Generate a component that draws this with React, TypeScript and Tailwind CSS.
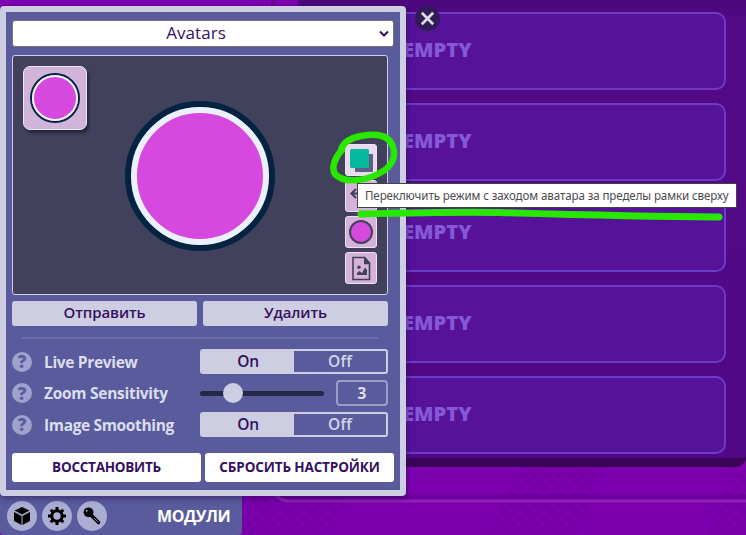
import React from 'react';

const sans = "font-['Open_Sans','Noto_Sans',sans-serif]";

function EmptySlot() {
  return (
    <div className="flex h-[78px] w-[428px] shrink-0 items-center rounded-[10px] border-2 border-[#6b3cc5] bg-[#56139a] pb-[2px] pl-[103px] text-[19px] font-extrabold text-[#8558d7]">
      <span className="inline-block origin-left scale-x-[1.06] leading-none">EMPTY</span>
    </div>
  );
}

function Backdrop() {
  return (
    <div className="h-[535px] w-[746px] bg-[#7d00ae]">
      <div className="flex h-[467px]">
        <div className="h-full w-[275px] border-r-4 border-[#6a0095] bg-[#7d00b4]" />
        <div className="w-[23px] bg-[#7d00b4]" />
        <div className="flex h-full w-[448px] flex-col gap-[13px] rounded-br-[10px] border-b-[9px] border-[#3a0558] bg-gradient-to-b from-[#4b077b] via-[#540986] via-5% to-[#520886] pt-3">
          <EmptySlot />
          <EmptySlot />
          <EmptySlot />
          <EmptySlot />
          <EmptySlot />
        </div>
      </div>
      <svg className="block" width="746" height="68" viewBox="0 0 746 68">
        <defs>
          <pattern id="dots" width="12" height="12" patternUnits="userSpaceOnUse" patternTransform="skewX(-12)">
            <circle cx="3" cy="3" r="3.4" fill="#7500a3" />
            <circle cx="9" cy="9" r="3.4" fill="#7500a3" />
          </pattern>
        </defs>
        <path d="M225 27H348L327 68H225ZM521 2H602L580 68H484ZM731 2H746V68H708Z" fill="url(#dots)" />
        <path d="M274 0V15Q274 30 290 30H746" fill="none" stroke="#69009a" strokeWidth="5" opacity=".75" />
        <path d="M274 0V18Q274 34 290 34H746" fill="none" stroke="#8d20b7" strokeWidth="3" />
      </svg>
    </div>
  );
}

function Toggle() {
  return (
    <div className="flex h-[25px] w-[188px] overflow-hidden rounded-[3px] border-2 border-[#cdcee2] text-[15.5px] font-semibold leading-[21px]">
      <div className="w-[92px] bg-[#cdcee2] text-center tracking-[-0.2px] text-[#34105f]">On</div>
      <div className="w-[92px] text-center tracking-[0.2px] text-[#d4d5e6]">Off</div>
    </div>
  );
}

function Row({ label, tracking, children }: { label: string; tracking: string; children: React.ReactNode }) {
  return (
    <div className="flex items-center">
      <div className="flex h-5 w-5 items-center justify-center rounded-full bg-[#a0a2cb] text-[17px] font-extrabold leading-none text-[#5b5ca1]">?</div>
      <div className={'w-[168px] whitespace-nowrap pl-3 text-[15.5px] font-bold leading-5 text-[#dcddec] ' + tracking}>{label}</div>
      {children}
    </div>
  );
}

function ToolButton({ children, active = false }: { children?: React.ReactNode; active?: boolean }) {
  return (
    <div className={'flex h-8 w-8 items-center justify-center rounded-[3px] border border-[#efe1f3] ' + (active ? 'bg-[#e9daee]' : 'bg-[#d5b2da]')}>
      {children}
    </div>
  );
}

function Preview() {
  return (
    <div className="relative mt-2 flex h-[240px] w-[376px] items-center justify-center rounded-[3px] border border-[#cdcee2] bg-[#41415e] pt-[2px]">
      <div className="h-[150px] w-[150px] rounded-full border-[6px] border-[#032340]">
        <div className="h-full w-full rounded-full border-[6px] border-[#eaf0fc] bg-[#d748df]" />
      </div>
      <div className="absolute left-[10px] top-[10px] flex h-16 w-16 items-center justify-center rounded-[7px] border border-[#eee6f7] bg-[#d0b4da] shadow-[2px_3px_3px_#242438]">
        <div className="h-[50px] w-[50px] rounded-full border-2 border-[#032340]">
          <div className="h-full w-full rounded-full border-2 border-[#eaf0fc] bg-[#d748df]" />
        </div>
      </div>
      <div className="absolute right-[10px] top-[88px] flex flex-col gap-1">
        <ToolButton active>
          <svg width="30" height="30" viewBox="0 0 30 30">
            <rect x="9" y="9" width="18" height="18" rx="1" fill="#5f5f83" />
            <rect x="4" y="4" width="19" height="19" rx="1.5" fill="#05b99d" />
          </svg>
        </ToolButton>
        <ToolButton>
          <svg width="30" height="30" viewBox="0 0 30 30" fill="none" stroke="#414461" strokeWidth="2.2">
            <path d="M5.500 12.500H25M10 8L5.500 12.500L10 17" />
          </svg>
        </ToolButton>
        <ToolButton>
          <div className="h-6 w-6 rounded-full border-2 border-[#41415e] bg-[#d748df]" />
        </ToolButton>
        <ToolButton>
          <svg width="30" height="30" viewBox="0 0 30 30">
            <path d="M7 4.500H18.500L23.500 10V26.500H7Z" fill="none" stroke="#41415e" strokeWidth="1.600" />
            <path d="M18 4H19L24.300 10V11.300H18ZM11 22V20L13.300 18L16 20L19 14.500L21 17V22Z" fill="#41415e" />
            <circle cx="13" cy="14.300" r="1.700" fill="#41415e" />
          </svg>
        </ToolButton>
      </div>
    </div>
  );
}

function SettingsPanel() {
  return (
    <div className="absolute left-0 top-[6px] flex h-[490px] w-[406px] flex-col rounded-[4px] border-[6px] border-[#cdcee2] bg-[#595b9d] px-[6px] pt-2 shadow-[1px_2px_6px_#200b4888]">
      <div className="relative flex h-[27px] w-[382px] shrink-0 items-center justify-center rounded-[3px] border border-[#77756d] bg-white pb-[2px] pr-4 text-[17px] font-medium leading-none tracking-[0.05px] text-[#34105f]">
        <span className="pl-[2px]">Avatars</span>
        <svg className="absolute right-[4px] top-[8px]" width="10" height="10" viewBox="0 0 10 10" fill="none" stroke="#34105f" strokeWidth="2">
          <path d="M1 2.500L5 6.500L9 2.500" />
        </svg>
      </div>
      <Preview />
      <div className="mt-[6px] flex gap-[6px] text-[15px] font-semibold leading-[23px] text-[#34105f]">
        <div className="h-[25px] w-[185px] rounded-[3px] bg-[#cdcee2] text-center tracking-[-0.1px]">Отправить</div>
        <div className="h-[25px] w-[185px] rounded-[3px] bg-[#cdcee2] text-center tracking-[-0.1px]">Удалить</div>
      </div>
      <div className="ml-[10px] mt-[11px] h-[2px] w-[356px] shrink-0 bg-[#6a6cab]" />
      <div className="mt-[10px] flex flex-col gap-[6px]">
        <Row label="Live Preview" tracking="tracking-[-0.33px]">
          <Toggle />
        </Row>
        <Row label="Zoom Sensitivity" tracking="tracking-[-0.28px]">
          <div className="flex w-[136px] items-center">
            <div className="flex h-[5px] w-[124px] items-center rounded-full bg-[#252746] pl-[23px]">
              <div className="h-5 w-5 shrink-0 rounded-full bg-[#cdcee2]" />
            </div>
          </div>
          <div className="h-[26px] w-[52px] rounded-[4px] border-2 border-[#9b9dc8] text-center text-[15.5px] font-bold leading-[22px] text-[#dcddec]">3</div>
        </Row>
        <Row label="Image Smoothing" tracking="tracking-[-0.35px]">
          <Toggle />
        </Row>
      </div>
      <div className="mt-4 flex gap-1 whitespace-nowrap text-[13.5px] font-bold leading-[29px] text-[#34105f]">
        <div className="h-[29px] w-[189px] rounded-[3px] bg-white text-center tracking-[-0.25px]">ВОССТАНОВИТЬ</div>
        <div className="h-[29px] w-[189px] rounded-[3px] bg-white text-center tracking-[-0.13px]">СБРОСИТЬ НАСТРОЙКИ</div>
      </div>
    </div>
  );
}

function ModuleBar() {
  return (
    <div className="absolute bottom-0 left-0 flex h-[45px] w-[242px] items-center gap-[5px] rounded-b-[4px] bg-[#595b9d] pl-[7px] pt-[7px]">
      <svg width="30" height="30" viewBox="0 0 30 30">
        <circle cx="15" cy="15" r="15" fill="#abadd2" />
        <path d="M15 6L22.500 9.500L15 13.500L7.500 9.500ZM7 11L14.500 15V24L7 20ZM23 11L15.500 15V24L23 20Z" />
      </svg>
      <svg width="30" height="30" viewBox="0 0 30 30">
        <circle cx="15" cy="15" r="15" fill="#abadd2" />
        <g stroke="#000" strokeWidth="3">
          <path d="M15 6V10M15 20V24M6 15H10M20 15H24M8.700 8.700L11.500 11.500M18.500 18.500L21.300 21.300M21.300 8.700L18.500 11.500M11.500 18.500L8.700 21.300" />
          <circle cx="15" cy="15" r="5.2" fill="none" strokeWidth="3" />
        </g>
      </svg>
      <svg width="30" height="30" viewBox="0 0 30 30">
        <circle cx="15" cy="15" r="15" fill="#abadd2" />
        <circle cx="11.5" cy="11.3" r="4.9" />
        <path d="M14 14L21.500 21.500" stroke="#000" strokeWidth="3.4" strokeLinecap="round" />
        <path d="M16.500 16.500L21.500 21.500" stroke="#abadd2" strokeWidth=".7" />
        <circle cx="9.7" cy="9.700" r="1" fill="#abadd2" />
      </svg>
      <div className="ml-[45px] text-[16px] font-bold leading-5 tracking-[-0.4px] text-white">МОДУЛИ</div>
    </div>
  );
}

export default function App() {
  return (
    <div className={'relative h-[535px] w-[746px] overflow-hidden ' + sans}>
      <Backdrop />
      <ModuleBar />
      <SettingsPanel />
      <svg className="absolute left-[415px] top-[6px]" width="25" height="25" viewBox="0 0 25 25">
        <circle cx="12.5" cy="12.5" r="12.5" fill="#301b56" />
        <path d="M6.800 6.800L18.200 18.200M18.200 6.800L6.800 18.200" stroke="#dedbe8" strokeWidth="2.7" />
      </svg>
      <svg className="absolute left-0 top-0" width="746" height="535" viewBox="0 0 746 535" fill="none" stroke="#29e800" strokeLinecap="round" strokeLinejoin="round">
        <path d="M342 150C335 157 331 168 335 174C344 184 365 181 380 173C393 166 396 156 393 147C389 134 376 133 361 136C350 138 343 143 341 150" strokeWidth="6.5" />
        <path d="M361 214C400 213 460 211.500 500 212.500C570 214.500 650 216.500 719 217" strokeWidth="7" />
      </svg>
      <div className="absolute left-[357px] top-[183px] h-[25px] w-[380px] whitespace-nowrap border border-[#424242] bg-white pl-[7px] font-['Noto_Sans',sans-serif] text-[12px] leading-[24px] text-[#4b4b4b]">
        <span className="inline-block origin-left scale-x-[0.963] tracking-[-0.1px]">Переключить режим с заходом аватара за пределы рамки сверху</span>
      </div>
    </div>
  );
}
